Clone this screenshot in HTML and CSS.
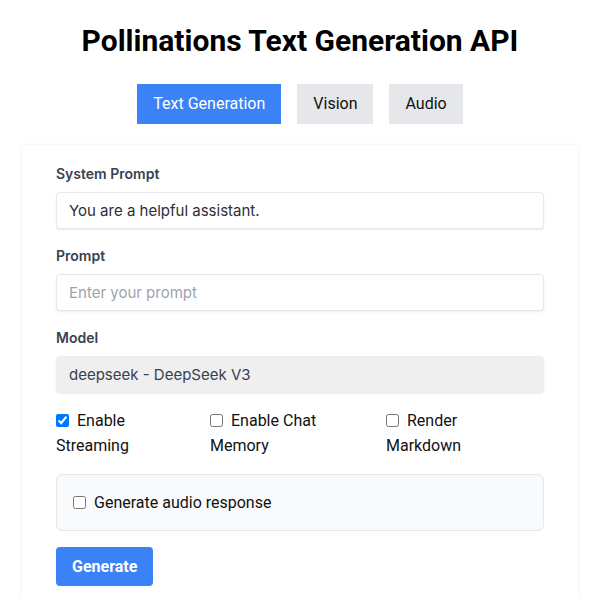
FILE: index.html
```html
<!DOCTYPE html>
<html>
<head>
<meta charset="utf-8">
<link rel="stylesheet" href="styles.css">
</head>
<body>
<div class="page">
  <h1 class="title">Pollinations Text Generation API</h1>
  <div class="tabs">
    <button class="tab active">Text Generation</button>
    <button class="tab">Vision</button>
    <button class="tab">Audio</button>
  </div>
  <div class="card">
    <div class="field">
      <label class="label">System Prompt</label>
      <div class="input">You are a helpful assistant.</div>
    </div>
    <div class="field">
      <label class="label">Prompt</label>
      <div class="input placeholder">Enter your prompt</div>
    </div>
    <div class="field field-last">
      <label class="label">Model</label>
      <div class="input select">deepseek - DeepSeek V3</div>
    </div>
    <div class="options">
      <label class="opt"><input type="checkbox" checked class="cb">Enable Streaming</label>
      <label class="opt"><input type="checkbox" class="cb">Enable Chat Memory</label>
      <label class="opt"><input type="checkbox" class="cb">Render Markdown</label>
    </div>
    <div class="audio-box">
      <label class="opt"><input type="checkbox" class="cb">Generate audio response</label>
    </div>
    <button class="generate">Generate</button>
  </div>
</div>
</body>
</html>
```
FILE: styles.css
```css
html, body {
  margin: 0;
  background: #ffffff;
}
body {
  font-family: Roboto, "Liberation Sans", sans-serif;
  color: #111;
}
.page {
  padding: 0 22px;
}
.title {
  margin: 0;
  padding-top: 22px;
  text-align: center;
  font-family: Roboto, sans-serif;
  font-weight: 700;
  font-size: 30px;
  line-height: 38px;
  color: #000;
}
.tabs {
  display: flex;
  justify-content: center;
  gap: 16px;
  margin-top: 24px;
}
.tab {
  font-family: Roboto, sans-serif;
  font-size: 16px;
  line-height: 20px;
  padding: 10px 16px;
  border: none;
  border-radius: 0;
  background: #e5e7eb;
  color: #111;
}
.tab.active {
  background: #3b82f6;
  color: #fff;
}
.card {
  margin-top: 21px;
  padding: 19px 34px 12px 34px;
  background: #fff;
  box-shadow: 0 0 4px rgba(0,0,0,0.06);
}
.field {
  margin-bottom: 17px;
}
.field-last {
  margin-bottom: 15px;
}
.label {
  display: block;
  font-family: Inter, sans-serif;
  font-weight: 600;
  font-size: 14px;
  line-height: 20px;
  color: #374151;
  margin-bottom: 8px;
}
.input {
  height: 37px;
  box-sizing: border-box;
  padding: 0 12px;
  display: flex;
  align-items: center;
  font-family: Inter, sans-serif;
  font-size: 15px;
  color: #2d2f33;
  border: 1px solid #e5e7eb;
  border-radius: 4px;
  box-shadow: 0 1px 2px rgba(0,0,0,0.08);
  background: #fff;
}
.placeholder {
  color: #9ca3af;
}
.select {
  background: #efefef;
  border-color: #efefef;
  color: #374151;
}
.options {
  display: grid;
  grid-template-columns: 154px 176px 1fr;
}
.opt {
  font-family: Roboto, sans-serif;
  font-size: 16px;
  line-height: 25px;
  color: #111;
}
.options .opt {
  width: 124px;
}
.cb {
  width: 13px;
  height: 13px;
  margin: 0 8px 0 0;
  vertical-align: -1px;
}
.audio-box {
  margin-top: 16px;
  padding: 15px 16px;
  background: #f9fafb;
  border: 1px solid #e5e7eb;
  border-radius: 6px;
}
.generate {
  margin-top: 16px;
  font-family: Roboto, sans-serif;
  font-weight: 700;
  font-size: 16px;
  line-height: 19px;
  padding: 10px 16px;
  color: #fff;
  background: #3b82f6;
  border: none;
  border-radius: 4px;
}
```
